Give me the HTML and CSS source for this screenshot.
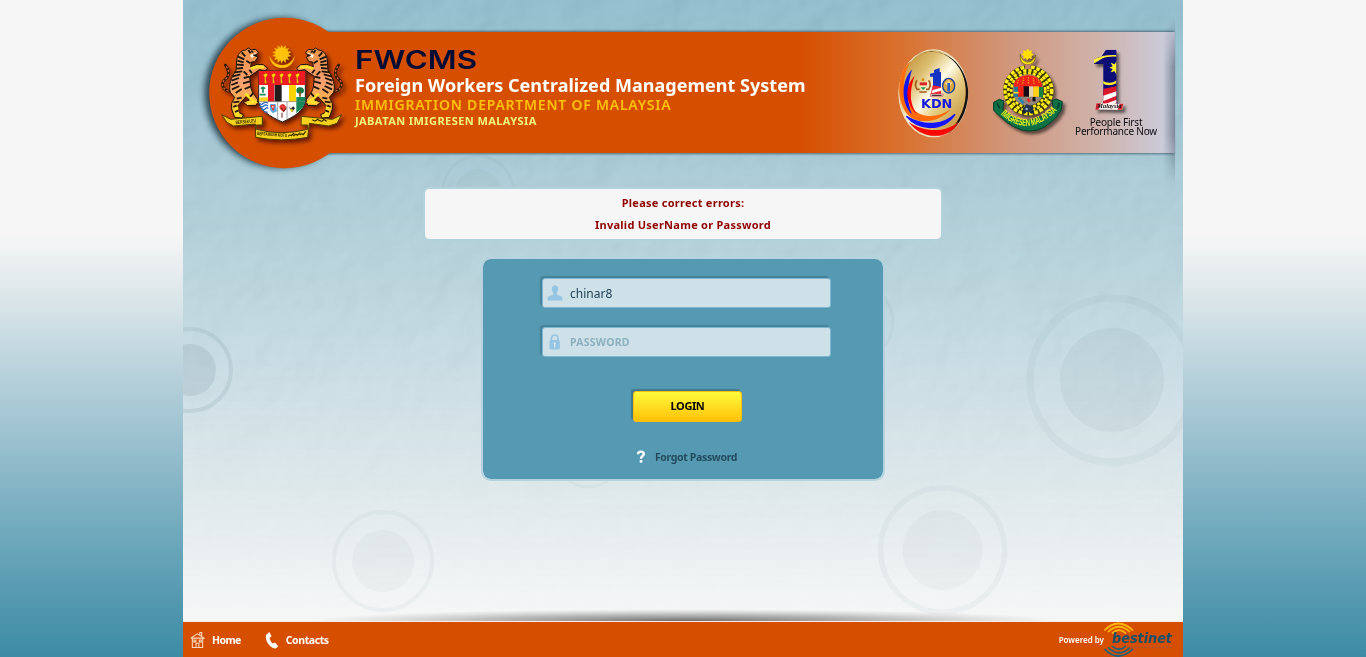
FILE: index.html
```html
<!DOCTYPE html>
<html lang="en">
<head>
<meta charset="utf-8">
<title>FWCMS</title>
<link rel="stylesheet" href="styles.css">
</head>
<body>
<div class="page">
  <svg class="backdrop" width="1000" height="657" viewBox="183 0 1000 657" aria-hidden="true">
    <defs>
      <filter id="paper" x="0" y="0" width="100%" height="100%">
        <feTurbulence type="fractalNoise" baseFrequency="0.022 0.022" numOctaves="3" seed="8" result="n"/>
        <feDiffuseLighting in="n" surfaceScale="5" lighting-color="#fff"><feDistantLight azimuth="215" elevation="50"/></feDiffuseLighting>
      </filter>
      <linearGradient id="fade" x1="0" y1="0" x2="0" y2="1"><stop offset="0" stop-color="#fff"/><stop offset=".6" stop-color="#aaa"/><stop offset="1" stop-color="#000"/></linearGradient>
      <mask id="paperFade"><rect x="183" y="0" width="1000" height="622" fill="url(#fade)"/></mask>
      <linearGradient id="band" gradientUnits="userSpaceOnUse" x1="800" y1="0" x2="1175" y2="0"><stop offset="0" stop-color="#d64f00"/><stop offset=".27" stop-color="#d9712f"/><stop offset=".55" stop-color="#d0967a"/><stop offset=".8" stop-color="#cfb3ac"/><stop offset="1" stop-color="#cacfe0"/></linearGradient>
      <linearGradient id="fold" x1="0" y1="0" x2="1" y2="0"><stop offset="0" stop-color="#334455" stop-opacity="0"/><stop offset="1" stop-color="#334455" stop-opacity=".5"/></linearGradient>
      <linearGradient id="foldFade" x1="0" y1="0" x2="0" y2="1"><stop offset="0" stop-color="#000"/><stop offset=".3" stop-color="#fff"/><stop offset=".7" stop-color="#fff"/><stop offset="1" stop-color="#000"/></linearGradient>
      <mask id="foldMask"><rect x="1160" y="15" width="20" height="172" fill="url(#foldFade)"/></mask>
      <radialGradient id="under"><stop offset="0" stop-color="#555" stop-opacity=".85"/><stop offset=".5" stop-color="#777" stop-opacity=".5"/><stop offset="1" stop-color="#999" stop-opacity="0"/></radialGradient>
      <filter id="soft" x="-20%" y="-20%" width="140%" height="140%"><feGaussianBlur stdDeviation="3"/></filter>
      <filter id="softThin" x="-5%" y="-20%" width="110%" height="140%"><feGaussianBlur stdDeviation="1.200"/></filter>
    </defs>
    <g mask="url(#paperFade)"><rect class="paper" x="183" y="0" width="1000" height="622" filter="url(#paper)"/></g>
    <g class="rings">
      <circle cx="190" cy="370" r="41" stroke-width="4"/><circle class="disc" cx="190" cy="370" r="26"/>
    </g>
    <g class="rings rings-light">
      <circle cx="1112" cy="380" r="82" stroke-width="7.5"/><circle class="disc" cx="1112" cy="380" r="52"/>
      <circle cx="942.5" cy="550" r="62" stroke-width="5.5"/><circle class="disc faint" cx="942.5" cy="550" r="40"/>
      <circle cx="383" cy="561" r="49" stroke-width="4"/><circle class="disc faint" cx="383" cy="561" r="31"/>
      <circle cx="478" cy="191" r="35" stroke-width="2.5"/><circle class="disc faint" cx="478" cy="192" r="23"/>
      <circle cx="855" cy="322" r="38" stroke-width="3"/><circle cx="588" cy="455" r="32" stroke-width="3"/>
    </g>
    <circle class="band-shadow" filter="url(#soft)" cx="279.500" cy="93" r="75"/>
    <rect class="band-shadow" filter="url(#softThin)" x="300" y="31" width="874" height="123"/>
    <rect x="282" y="32" width="893" height="121" fill="url(#band)"/>
    <circle cx="284.500" cy="93" r="75.300" fill="#d64f00"/>
    <rect x="1163" y="15" width="12" height="172" fill="url(#fold)" mask="url(#foldMask)"/>
    <ellipse cx="685" cy="621" rx="375" ry="12" fill="url(#under)"/>
  </svg>

  <header class="header">
    <svg class="emblem" width="172" height="180" viewBox="0 0 516 540" role="img" aria-label="Coat of arms">
      <defs>
        <filter id="drop" x="-20%" y="-20%" width="150%" height="150%"><feDropShadow dx="8" dy="9" stdDeviation="7" flood-color="#300" flood-opacity=".7"/></filter>
        <linearGradient id="fur" x1="0" y1="0" x2="0" y2="1"><stop offset="0" stop-color="#ee9448"/><stop offset=".5" stop-color="#f8a070"/><stop offset=".75" stop-color="#fbb04a"/><stop offset="1" stop-color="#ffd91c"/></linearGradient>
        <g id="tiger">
          <path d="M137 274 C112 264 116 246 127 238 C142 225 138 210 127 195" fill="none" stroke="#27140a" stroke-width="8" stroke-linecap="round"/>
          <path d="M137 274 C112 264 116 246 127 238 C142 225 138 210 127 195" fill="none" stroke="#d9622a" stroke-width="4" stroke-dasharray="7 5"/>
          <path d="M188 150 L196 144 L205 150 L218 148 L226 157 L222 164 L212 163 L224 172 L216 185 L205 186 L203 201 L222 193 L241 194 L254 205 L246 212 L229 209 L222 214 L200 229 L203 262 L208 276 L225 300 L220 316 L194 317 L180 307 L199 300 L191 288 L178 302 L162 320 L168 338 L181 344 L177 354 L155 352 L146 327 L146 310 L155 292 L142 277 C136 258 144 232 159 212 L161 181 C163 163 173 151 188 150Z" fill="url(#fur)" stroke="#201208" stroke-width="3"/>
          <path d="M203 206 L222 200 L243 202 M187 281 L215 306 L192 309 M160 320 L165 345" fill="none" stroke="#ffdf2a" stroke-width="9"/>
          <path d="M165 170 L184 178 M163 182 L182 187 M162 194 L182 195 M160 206 L180 204 M154 217 L178 214 M149 229 L172 223 M146 242 L168 234 M145 255 L165 247 M147 268 L169 258 M158 279 L176 267 M176 157 L187 169 M199 209 L207 220 M182 214 L193 225 M182 234 L199 230 M180 250 L201 244 M185 267 L202 260 M161 296 L176 293 M151 307 L169 305 M151 321 L161 316 M156 336 L167 331 M210 280 L201 290 M196 150 L203 160 M190 182 L202 190" stroke="#1c1510" stroke-width="5.500"/>
          <path d="M201 165 L219 158 L215 169 L205 174Z" fill="#fff4de"/><path d="M204 154 L211 157 M211 165 L221 168" stroke="#111" stroke-width="4"/>
        </g>
      </defs>
      <g filter="url(#drop)">
        <path d="M259 167 C264 216 330 216 335 167 C322 205 275 205 259 167Z" fill="#ffc20b"/>
        <path d="M296 134 l4 10 8-8 0 11 10-3-5 10 11 2-9 6 9 6-11 2 5 10-10-3 0 11-8-8-4 10-4-10-8 8 0-11-10 3 5-10-11-2 9-6-9-6 11-2-5-10 10 3 0-11 8 8z" fill="#ffc20b"/>
        <path d="M116 344 L143 358 L238 349 L238 375 L220 375 L220 388 Q296 408 374 388 L374 375 L354 375 L355 349 L448 358 L476 344 L462 370 L437 378 L379 370 L374 412 Q296 427 218 412 L217 372 L152 378 L132 367Z" fill="#f5d21c" stroke="#513900" stroke-width="3"/>
        <use href="#tiger"/><use href="#tiger" transform="matrix(-1 0 0 1 594 0)"/>
        <path d="M227 213 H367 V300 C366 331 334 350 298 366 C262 350 228 331 227 300Z" fill="#fff" stroke="#222" stroke-width="3"/>
        <path d="M227 213H367V255H227Z" fill="#ee1c24"/>
        <path id="kris" d="M241 224l9-5 4 6-6 8 3 17h-6v-17z" fill="#ffd400" stroke="#8b4700"/>
        <use href="#kris" x="24"/><use href="#kris" x="48"/><use href="#kris" x="72"/><use href="#kris" x="96"/>
        <path d="M255 255h19v50h-19z" fill="#e21d25"/><path d="M275 255h21v50h-21z" fill="#221b1c"/><path d="M318 255h21v50h-21z" fill="#ffd400"/>
        <path d="M228 292h27v13h-27z" fill="#ffd51b"/><path d="M229 305h26v34q-25-18-26-34z" fill="#fff"/>
        <path d="M229 310q6 6 12 0t14 0M230 318q6 6 12 0t13 0M235 326q6 6 12 0t8 0M243 334q6 5 11 1" fill="none" stroke="#326fc2" stroke-width="4"/>
        <path d="M240 278V264m-6 2q6-8 12 0M230 284h18" fill="none" stroke="#168a55" stroke-width="5"/>
        <path d="M340 291h27v12q-5 22-27 36z" fill="#15895a"/><path d="M340 271q2-12 12-9 12 1 11 12-3 9-11 6-11 3-12-9z" fill="#147a43"/><path d="M351 275v15" stroke="#7b4b12" stroke-width="5"/>
        <path d="M261 312h17l4 22-13 6-8-10z" fill="#5caee2"/><path d="M264 317h10l-3 14z" fill="#f6f6ed" stroke="#e22" stroke-width="3"/>
        <path d="M299 312q-14 4-8 15l10 9 9-8q0-14-11-16z" fill="#e43a35"/><path d="M295 324l7 11 8-12M297 353v-15" fill="none" stroke="#7d1a1a" stroke-width="3"/>
        <path d="M316 318l8 8 6-7 6 6-9 12z" fill="#222"/><path d="M321 328h10l-5 10z" fill="#ffd51b"/>
        <path d="M284 306V360M312 306V358M228 305H367" fill="none" stroke="#777" stroke-width="2"/>
        <g class="scroll-text"><text x="158" y="373" textLength="62" lengthAdjust="spacingAndGlyphs" transform="rotate(-6 158 373)">BERSEKUTU</text><text x="222" y="405" textLength="90" lengthAdjust="spacingAndGlyphs" transform="rotate(4 222 405)">BERTAMBAH MUTU</text></g>
        <path d="M316 409q5-7 9-2l8-8m-2 9q8-9 12-2l8-8m-1 7q6-6 11-1l7-10M388 359q8 8 15-1l8 4q7 5 11-4l9 6" fill="none" stroke="#342800" stroke-width="3.500"/>
      </g>
    </svg>
    <div class="titles">
      <svg class="wordmark" width="140" height="28"><text x="0" y="21" textLength="122" lengthAdjust="spacingAndGlyphs">FWCMS</text></svg>
      <h1 class="system">Foreign Workers Centralized Management System</h1>
      <div class="dept">IMMIGRATION DEPARTMENT OF MALAYSIA</div>
      <div class="jabatan">JABATAN IMIGRESEN MALAYSIA</div>
    </div>
    <div class="logos">
      <svg class="kdn" width="85" height="120" viewBox="30 0 255 360">
        <defs><linearGradient id="gold" x1="0" y1="0" x2="1" y2="1"><stop offset="0" stop-color="#b87f24"/><stop offset=".3" stop-color="#ddc073"/><stop offset=".48" stop-color="#fffbe6"/><stop offset=".62" stop-color="#e6cc83"/><stop offset="1" stop-color="#b67a20"/></linearGradient></defs>
        <ellipse cx="160" cy="190" rx="105" ry="132" fill="#eee1c5"/>
        <ellipse cx="160" cy="190" rx="102" ry="129" fill="url(#gold)"/>
        <path d="M105 76 C215 30 277 138 263 210 C254 265 228 294 204 310 C280 235 275 112 190 72 Q150 56 105 76Z" fill="#15120f"/>
        <path d="M93 93 C50 125 48 203 78 248 C110 290 180 277 212 238 C177 263 130 266 101 239 C64 204 65 133 93 93Z" fill="#ff6b0a"/>
        <path d="M96 118 C59 159 66 226 96 253 Q72 201 96 118Z" fill="#1414ee"/><path d="M104 137 C72 170 76 222 111 252 Q78 210 104 137Z" fill="#f00"/>
        <path d="M79 259 C117 304 190 305 225 253 C191 287 131 290 79 259Z" fill="#1414ff" stroke="#1414ff" stroke-width="4"/><path d="M86 276 C120 325 205 338 236 275 C198 308 135 309 86 276Z" fill="#fa0808"/>
        <path d="M150 131l12-3v-8l17-6v12h4v64h-24v-50h-9z" fill="#1634c3"/><path d="M158 166l25 4v24h-31z" fill="#ed2939"/><path d="M158 180l25-7v9l-28 8z" fill="#fff"/><path d="M151 192h39l-3 8h-35z" fill="#fff" stroke="#c44" stroke-width="2"/><path d="M155 196h30" stroke="#111" stroke-width="3"/>
        <g fill="none" stroke="#a35c1b" stroke-width="5"><path d="M111 151q-9 13 0 27h8M146 151q9 13 0 27h-8M118 186h22"/></g><path d="M119 157h22v14l-11 11-11-11z" fill="#f9e9bd"/><path d="M119 157h22v9h-22z" fill="#da2323"/><path d="M122 172h15l-7 8z" fill="#179347"/><circle cx="129" cy="149" r="4" fill="#cf8e00"/>
        <ellipse cx="206" cy="167" rx="18" ry="22" fill="#dba939" stroke="#163aa5" stroke-width="4"/><path d="M197 159h18M206 151v28m-9-21 9 10 9-10" stroke="#f0d68b" stroke-width="6" fill="none"/><path d="M202 159v25h8v-25" fill="#3059c9"/>
        <text class="kdn-text" x="123" y="235" textLength="94" lengthAdjust="spacingAndGlyphs">KDN</text>
      </svg>
      <svg class="immigration" width="87" height="100" viewBox="0 0 261 300">
        <defs><filter id="dropSmall" x="-20%" y="-20%" width="150%" height="150%"><feDropShadow dx="8" dy="9" stdDeviation="5" flood-opacity=".55"/></filter><path id="arc" d="M45 221 Q128 300 220 208"/></defs>
        <g filter="url(#dropSmall)">
          <path d="M106 43C99 83 153 86 152 45 142 75 112 72 106 43Z" fill="#ffe20c" stroke="#5f5410" stroke-width="2"/>
          <path d="M129 26l4 7 8-2-2 8 7 5-7 4 1 9-8-3-5 6-5-6-8 2 2-8-7-5 7-4-2-8 9 2z" fill="#ffdf00"/>
          <circle cx="130" cy="151" r="60" fill="none" stroke="#39350b" stroke-width="31"/>
          <g class="wheat"><circle cx="130" cy="151" r="70" stroke-width="10" stroke-dasharray="11 5"/><circle cx="130" cy="151" r="60" stroke-width="8" stroke-dasharray="10 6" stroke-dashoffset="7"/><circle cx="130" cy="151" r="51" stroke-width="8" stroke-dasharray="9 5"/></g>
          <path d="M120 73h17v14h-17z" fill="#bf8169"/>
          <circle cx="129" cy="149" r="46" fill="#b8895d"/>
          <path d="M87 133q6-25 42-27 34 2 42 27v10H87z" fill="#ee2319"/><path d="M100 119l-3 14m18-20-2 21m17-22v21m15-19 2 19m13-15 3 13" stroke="#f0b414" stroke-width="3" stroke-dasharray="4 3"/>
          <path d="M86 140h28v31H86z" fill="#2c7794"/><path d="M99 139h18v31H99z" fill="#ef2419"/><path d="M116 139h16v31h-16z" fill="#151014"/><path d="M132 139h13v31h-13z" fill="#e4d4ad"/><path d="M145 139h17v31h-17z" fill="#ffd014"/><path d="M162 141h12v32h-12z" fill="#138343"/>
          <path d="M86 158h15" stroke="#ffe022" stroke-width="5"/><path d="M88 171h82q-5 20-41 27-36-5-41-27z" fill="#93867c"/><path d="M101 173l15 17" stroke="#2a83ac" stroke-width="8"/><path d="M127 177l8 8" stroke="#ed2929" stroke-width="8"/><path d="M147 171v13" stroke="#111" stroke-width="9"/>
          <circle cx="118" cy="214" r="7" fill="#182334"/><circle cx="140" cy="214" r="7" fill="#182334"/><path d="M113 206l12-14 21 10-5 14h-20z" fill="#24344d"/><circle cx="125" cy="207" r="4" fill="#97abc4"/>
          <path d="M26 187l17-9 14 5-4 25q71 65 152-2l-4-24 13-5 18 8-4 28q-11 7-10 14-80 93-177-1l-15-15z" fill="#087145" stroke="#043c2a" stroke-width="3"/>
          <path d="M36 190l8 15M223 188l-6 18" stroke="#063e2c" stroke-width="5"/>
          <text class="arc-text"><textPath href="#arc" startOffset="3" textLength="192" lengthAdjust="spacingAndGlyphs">IMIGRESEN MALAYSIA</textPath></text>
        </g>
      </svg>
      <div class="one">
        <svg class="one-mark" width="88" height="71" viewBox="126 75 264 213">
          <defs><clipPath id="oneShape"><path d="M192 117l22-7 14-21h31v161h9v18h-51v-18h3V132h-28z"/></clipPath></defs>
          <g filter="url(#dropSmall)"><g clip-path="url(#oneShape)"><path d="M180 80h100v200H180z" fill="#0a0a78"/>
            <path d="M190 115l28-7q17-4 41-3v5q-28-1-41 5l-28 17z" fill="#ffef38"/><path d="M215 181q26 15 44 0v9q-23 12-44-1z" fill="#ffee2c"/><path d="M260 123l-6 10-12-5 6 11-10 4 10 4-6 10 12-3 6 11z" fill="#ffee2c"/>
            <path d="M215 208l45-10v65h-45z" fill="#d9172c"/><path d="M215 229l45-15v13l-45 18zM215 256l45-17v10l-45 16z" fill="#fff"/></g>
            <path d="M199 250l81 1-4 19-80-2z" fill="#f6eceb"/><path d="M199 250h14l-8 19h-9zM269 251h11l-4 18h-13z" fill="#cf2731"/>
            <text class="script-text" x="202" y="265" textLength="72" lengthAdjust="spacingAndGlyphs">Malaysia</text></g>
        </svg>
        <div class="motto">People First</div><div class="motto">Performance Now</div>
      </div>
    </div>
  </header>

  <main class="main">
    <div class="errors"><p class="error">Please correct errors:</p><p class="error">Invalid UserName or Password</p></div>
    <form class="login">
      <label class="field"><svg width="16" height="16" viewBox="0 0 16 16"><path d="M8 .5c2.300 0 3.300 1.500 3.200 3.500-.1 2-.8 3-1.400 3.800v1.700c1 1.200 5.700.8 5.700 4.400 0 1.200-.5 1.600-1.500 1.600H2c-1 0-1.500-.4-1.500-1.600 0-3.600 4.700-3.200 5.700-4.400V7.800C5.600 7 4.900 6 4.800 4 4.700 2 5.700.5 8 .5Z" fill="#96c5e3"/></svg><span class="user">chinar8</span></label>
      <label class="field"><svg width="16" height="16" viewBox="0 0 16 16"><path d="M4.300 7V4.700a3.400 3.700 0 0 1 6.800 0V7" fill="none" stroke="#96c5e3" stroke-width="1.700"/><rect x="2.500" y="6" width="10.300" height="9.500" rx="1.500" fill="#96c5e3"/><path d="M6.300 9.200q1.400-1.800 2.800 0l-.8 1.300v3H7v-3z" fill="#d6e8f2"/></svg><span class="placeholder">PASSWORD</span></label>
      <button class="submit" type="button">LOGIN</button>
      <a class="forgot"><svg width="10" height="14" viewBox="0 0 10 14"><path d="M2 4.200C2 .7 8 .8 7.800 4 7.700 6 5 5.800 5 8.700" fill="none" stroke="#fff" stroke-width="2.400"/><rect x="3.700" y="10" width="2.700" height="2.600" fill="#fff"/></svg><span>Forgot Password</span></a>
    </form>
  </main>

  <footer class="footer">
    <a class="nav"><svg width="15" height="18" viewBox="0 0 16 18" fill="none" stroke="#f9d9c3" stroke-width="1.100"><path d="M2.500 7.500v9.500h11V7.500M.8 7l7-4.500L15.200 7H.8M10.500 3.500V1h2v4M6.500 17v-4.500h3V17M4.200 9h2v2h-2zM10 9h2v2h-2z"/></svg><span class="home">Home</span></a>
    <a class="nav contacts"><svg width="14" height="18" viewBox="0 0 14 18"><path d="M1 4 4.300.9l2.300 4.300-1.900 1.500c.3 2.300 1.300 4.300 3 5.700l2.300-.9 3.300 3.800-2.500 2.200C5.200 17.500-.2 10.200 1 4Z" fill="#fff"/></svg><span>Contacts</span></a>
    <div class="powered"><span>Powered by</span>
      <svg width="74" height="35" viewBox="0 0 74 35"><g fill="none" stroke-width="1.700"><path d="M.5 8.500Q14-5.500 29 8.500M4 10Q15-.5 26 10M8 11.300Q15 5 22 11.300" stroke="#ffb60a"/><path d="M.5 27Q14 41 29 27M4 25.500Q15 36 26 25.500M8 24Q15 30.500 22 24" stroke="#17627f"/></g><text class="bestinet" x="8" y="21" textLength="60" lengthAdjust="spacingAndGlyphs">bestinet</text><path d="M27 25.500h42" stroke="#a4563a" stroke-width="1.500" stroke-dasharray="2 1.500"/></svg>
    </div>
  </footer>
</div>
</body>
</html>
```
FILE: styles.css
```css
body {
  margin: 0;
  min-height: 657px;
  overflow: hidden;
  font-family: "Noto Sans", "Open Sans", sans-serif;
  background: linear-gradient(#f6f6f6 0, #f6f6f6 235px, #dfe8eb 290px, #c5d9e1 345px, #9fc3d1 430px, #73abbe 525px, #3d8ba5 657px);
}
.page {
  position: relative;
  display: flex;
  flex-direction: column;
  width: 1000px;
  height: 657px;
  margin: 0 auto;
  background: linear-gradient(#86b8ca 0, #9ac2d0 120px, #a5c9d5 180px, #b8d4dd 290px, #cee0e7 400px, #dfe9ec 490px, #f1f4f5 585px, #f6f6f6 621px);
}
.backdrop { position: absolute; inset: 0; }
.paper { mix-blend-mode: soft-light; opacity: .15; }
.rings circle { fill: none; stroke: #55707c; stroke-opacity: .12; }
.rings .disc { fill: #55707c; fill-opacity: .13; stroke: none; }
.rings-light circle { stroke-opacity: .05; }
.rings-light .disc { fill-opacity: .07; }
.rings-light .faint { fill-opacity: .045; }
.band-shadow { fill: #18323f; fill-opacity: .85; }
rect.band-shadow { fill-opacity: .6; }

.header { position: relative; display: flex; height: 187px; flex: none; }
.emblem { flex: none; }
.scroll-text { font: bold 15px "Liberation Sans", sans-serif; fill: #342800; }
.titles { padding-top: 48px; white-space: nowrap; }
.wordmark { display: block; margin-bottom: -6px; font: 600 26px Inter, sans-serif; fill: #030c35; }
.system { margin: 3px 0 0; font-size: 18px; line-height: 24px; font-weight: 700; letter-spacing: .02px; color: #fff; }
.dept { font-size: 14px; line-height: 16px; font-weight: 600; letter-spacing: .77px; color: #ffc20b; }
.jabatan { font-size: 11px; line-height: 16px; font-weight: 700; letter-spacing: .43px; color: #eefa7c; }
.logos { display: flex; margin-left: auto; padding-right: 23px; }
.kdn { margin: 30px 10px 0 0; }
.kdn-text { font: bold 39px "DejaVu Sans", sans-serif; fill: #1519dd; }
.immigration { margin-top: 40px; }
.arc-text { font: bold 29px "Liberation Sans", sans-serif; fill: #f6fa1d; }
.wheat circle { fill: none; stroke: #ffee16; }
.one { width: 88px; padding-top: 45px; text-align: center; }
.one-mark { display: block; margin-bottom: 2px; }
.script-text { font: italic bold 17px "Liberation Serif", serif; fill: #111; }
.motto { font-size: 10px; line-height: 9px; letter-spacing: -.2px; color: #0b0b10; white-space: nowrap; }

.main { position: relative; display: flex; flex-direction: column; align-items: center; flex: 1; }
.errors { box-sizing: border-box; width: 520px; height: 54px; border: 2px solid #b4d2dc; border-radius: 6px; background: #f6f6f6; background-clip: padding-box; padding-top: 3px; text-align: center; }
.error { margin: 0; font-size: 11px; line-height: 22px; font-weight: 700; letter-spacing: .26px; color: #8f0000; }
.login { box-sizing: border-box; display: flex; flex-direction: column; align-items: center; width: 404px; height: 224px; margin-top: 16px; padding: 19px 0 0 7px; border: 2px solid #b6d2de; border-radius: 10px; background: #559ab2; background-clip: padding-box; }
.field { box-sizing: border-box; display: flex; align-items: center; gap: 7px; width: 289px; height: 30px; margin: 0 0 19px; padding-left: 4px; border: 1px solid #80b6d4; border-radius: 3px; background: #cee1e8; box-shadow: -2px -2px 1px rgba(40, 90, 110, .35); }
.user { font-size: 12px; color: #23425a; }
.placeholder { font-size: 10.500px; font-weight: 700; letter-spacing: .25px; color: #8bb0c0; }
.submit { position: relative; left: 1px; width: 109px; height: 31px; margin-top: 15px; padding: 0 0 2px; border: 1px solid #fcbd05; border-radius: 3px; background: linear-gradient(#fffb3d, #ffc107); font: 700 11px "Noto Sans", sans-serif; letter-spacing: -.4px; color: #000; box-shadow: -2px -2px 1px rgba(40, 80, 100, .45); }
.forgot { display: flex; align-items: center; gap: 9px; margin-top: 26px; font-size: 10.500px; line-height: 18px; font-weight: 700; letter-spacing: -.35px; color: #234b5d; }

.footer { position: relative; box-sizing: border-box; display: flex; align-items: center; flex: none; height: 36px; border-top: 1px solid #f6ede8; padding: 0 5px 0 7px; background: #d64f00; color: #fff; font-size: 10.500px; font-weight: 700; }
.nav { display: flex; align-items: center; gap: 7px; letter-spacing: -.4px; }
.home { letter-spacing: -.6px; }
.contacts { margin-left: 24px; }
.powered { display: flex; align-items: center; margin-left: auto; font-size: 8px; font-weight: 600; }
.bestinet { font: italic bold 14px "DejaVu Sans", sans-serif; fill: #17506d; }
```
